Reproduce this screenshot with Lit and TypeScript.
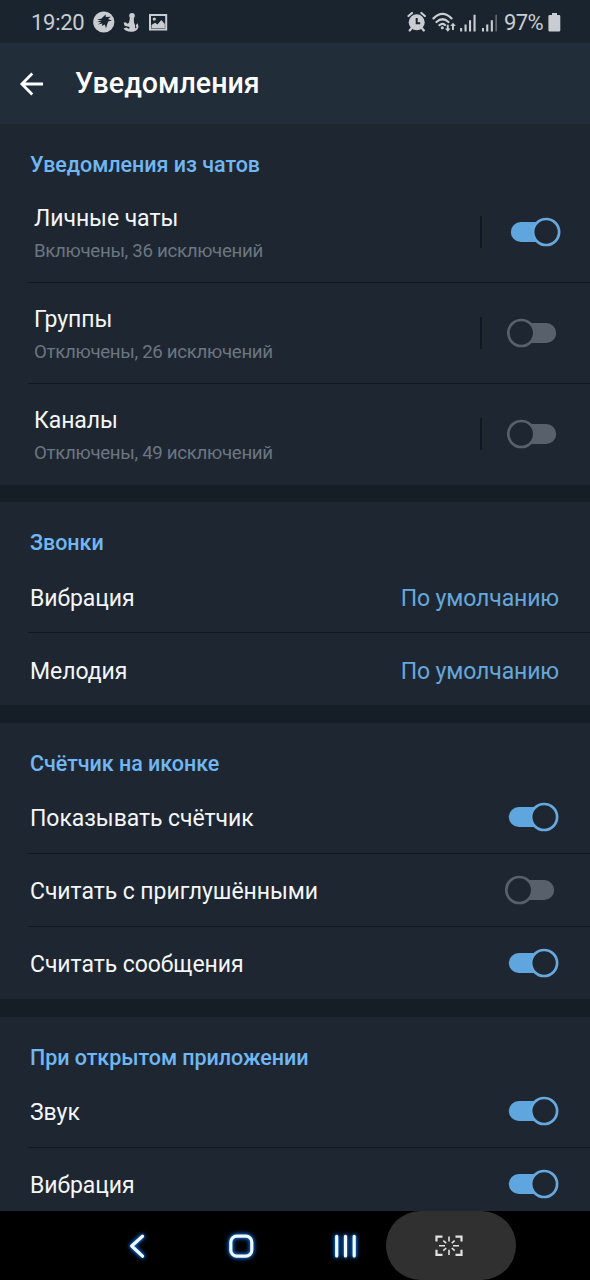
import { LitElement, html, svg, css, nothing } from "lit";
import { customElement, property } from "lit/decorators.js";

interface Row {
  label: string;
  detail?: string;
  value?: string;
  on?: boolean;
}
interface Section {
  title: string;
  rows: Row[];
}

const SECTIONS: Section[] = [
  {
    title: "Уведомления из чатов",
    rows: [
      { label: "Личные чаты", detail: "Включены, 36 исключений", on: true },
      { label: "Группы", detail: "Отключены, 26 исключений", on: false },
      { label: "Каналы", detail: "Отключены, 49 исключений", on: false },
    ],
  },
  {
    title: "Звонки",
    rows: [
      { label: "Вибрация", value: "По умолчанию" },
      { label: "Мелодия", value: "По умолчанию" },
    ],
  },
  {
    title: "Счётчик на иконке",
    rows: [
      { label: "Показывать счётчик", on: true },
      { label: "Считать с приглушёнными", on: false },
      { label: "Считать сообщения", on: true },
    ],
  },
  {
    title: "При открытом приложении",
    rows: [
      { label: "Звук", on: true },
      { label: "Вибрация", on: true },
    ],
  },
];

@customElement("toggle-switch")
export class ToggleSwitch extends LitElement {
  @property({ type: Boolean }) on = false;

  static styles = css`
    :host { display: block; width: 54px; height: 30px; }
    svg { display: block; }
    .track-on { fill: #5fa5de; }
    .track-off { fill: #57606b; }
    .knob { fill: #1e2731; stroke-width: 2.7; }
    .knob-on { stroke: #66a9df; }
    .knob-off { stroke: #57606b; }
  `;

  render() {
    return html`<svg width="54" height="30" viewBox="0 0 54 30">
      ${this.on
        ? svg`<rect class="track-on" x="3.8" y="5" width="42" height="20" rx="10"/>
              <circle class="knob knob-on" cx="39.1" cy="15" r="13"/>`
        : svg`<rect class="track-off" x="10" y="5" width="39.2" height="20" rx="10"/>
              <circle class="knob knob-off" cx="14.3" cy="15" r="13"/>`}
    </svg>`;
  }
}

@customElement("status-bar")
export class StatusBar extends LitElement {
  static styles = css`
    :host {
      display: flex;
      align-items: center;
      justify-content: space-between;
      height: 43px;
      box-sizing: border-box;
      padding: 0 29px 0 31px;
      background: #1a242e;
      color: #c9cdd1;
      font-size: 22px;
    }
    .side { display: flex; align-items: center; height: 24px; }
    svg { display: block; fill: currentColor; flex: none; }
    .line { fill: none; stroke: currentColor; stroke-width: 2.2; stroke-linecap: round; }
    .cut { fill: #1a242e; }
    .dim { opacity: 0.4; }
    .time { width: 62px; white-space: nowrap; letter-spacing: -0.3px; padding-top: 1px; }
    .percent { width: 44px; white-space: nowrap; letter-spacing: -0.6px; padding-top: 1px; }
  `;

  render() {
    return html`
      <div class="side">
        <span class="time">19:20</span>
        <svg width="22" height="24" viewBox="0 0 22 24">
          <circle cx="10.8" cy="12" r="10.6"/>
          <path class="cut" d="M4 9.8 8.5 8.4 12.5 4.6 12.8 7 17.8 6.8 15 9 18.8 10.5 15.2 11.5 14.2 14.2 13 18.3 11.8 14.6 8.7 16 9.5 13.6 4.6 14.6 8.2 12.4 4.4 11.6 8.8 10.4Z"/>
        </svg>
        <svg width="34" height="24" viewBox="0 0 34 24">
          <circle cx="17" cy="5.8" r="2.8"/>
          <path d="M15 7.5 18.8 8 19 12.5 20 15 20.2 18.6 21.5 17.8 20.8 15.2 22.6 13.2 23.5 16.5C23 20.2 20 21.7 16.3 21.7 12.3 21.7 9.6 20.4 8.6 18.2L11.5 17.5 14 19 14.6 17 9.6 15.8 8.6 12.8 10.5 12.2 12.5 13.8 14 12.8Z"/>
        </svg>
        <svg width="20" height="24" viewBox="0 0 20 24">
          <path fill-rule="evenodd" d="M0 4H18.2V20.6H0ZM2 6V18.6H16.2V6Z"/>
          <path d="M2.5 15 6 12.8 8.5 14.5 12.3 10 15.8 14V18H2.5Z"/><circle cx="5.3" cy="9" r="1.6"/>
        </svg>
      </div>
      <div class="side">
        <svg width="25" height="24" viewBox="0 0 25 24">
          <circle cx="9.7" cy="12.3" r="8"/>
          <path class="line" d="M1.5 6 5 3M14.4 3 17.9 6M4.5 18.2 2.7 20.5M15 18.2 16.8 20.5"/>
          <path d="M9.7 8V13.2H13.2" fill="none" stroke="#1a242e" stroke-width="2"/>
        </svg>
        <svg width="28" height="24" viewBox="0 0 28 24">
          <path class="line" d="M1.5 8.4Q10.5-.5 19.5 8.4M4.5 12Q10.5 6.5 16.5 12M7.5 15.2Q10.5 12.7 13 15"/>
          <circle cx="10.3" cy="17.7" r="1.5"/>
          <path d="M14.8 14.8H16.7V18.5H18.5L15.8 21.8 13 18.5H14.8ZM20 20V16H18.2L21 12.8 23.8 16H21.9V20Z"/>
        </svg>
        <svg width="22" height="24" viewBox="0 0 22 24">
          <path d="M.1 18H2.1V21.6H.1ZM4.5 14.6H6.6V21.6H4.5ZM9 10.2H11.1V21.6H9ZM13.5 4.8H15.6V21.6H13.5Z"/>
        </svg>
        <svg width="22" height="24" viewBox="0 0 22 24">
          <path d="M0 18H2V21.6H0ZM4.2 14.6H6.3V21.6H4.2ZM8.8 10.2H10.9V21.6H8.8Z"/>
          <path class="dim" d="M13.3 4.8H15V21.6H13.3Z"/>
        </svg>
        <span class="percent">97%</span>
        <svg width="13" height="24" viewBox="0 0 13 24">
          <path d="M4 3H9V5H11Q12.3 5 12.3 6.3V20.2Q12.3 21.5 11 21.5H1.7Q.4 21.5 .4 20.2V6.3Q.4 5 1.7 5H4Z"/>
        </svg>
      </div>`;
  }
}

@customElement("nav-bar")
export class NavBar extends LitElement {
  static styles = css`
    :host {
      display: flex;
      align-items: center;
      height: 69px;
      flex: none;
      background: #000;
      padding-left: 117px;
    }
    svg { display: block; fill: none; stroke: #f2f9ff; stroke-width: 3.2; stroke-linecap: round; stroke-linejoin: round; }
    .glow { filter: drop-shadow(0 0 1.5px #0b6cd8) drop-shadow(0 0 2.2px #0866d4); }
    .key { width: 104px; flex: none; }
    .key.last { width: 61px; }
    .assist {
      display: flex;
      align-items: center;
      justify-content: center;
      width: 130px;
      height: 69px;
      border-radius: 35px;
      background: #303030;
      box-sizing: border-box;
      padding-right: 4px;
    }
    .scan { stroke: #e2e2e2; stroke-width: 1.6; stroke-linecap: butt; stroke-linejoin: miter; }
    .corner { stroke-width: 2.2; }
  `;

  render() {
    return html`
      <div class="key"><svg class="glow" width="40" height="44" viewBox="0 0 40 44">
        <path d="M25.5 12.3 14.7 22 25.5 32.2"/></svg></div>
      <div class="key"><svg class="glow" width="40" height="44" viewBox="0 0 40 44">
        <rect x="9.8" y="12.2" width="21" height="20" rx="6"/></svg></div>
      <div class="key last"><svg class="glow" width="40" height="44" viewBox="0 0 40 44">
        <path d="M11.7 12.3V32M20.5 12.3V32M29.2 12.3V32"/></svg></div>
      <div class="assist"><svg class="scan" width="30" height="24" viewBox="0 0 30 24">
        <path class="corner" d="M2.5 7.5V2.7H8.5M21.5 2.7H27.5V7.5M27.5 15.7V20.8H21.5M8.5 20.8H2.5V15.7"/>
        <path d="M15 2.5V7.5M15 15.7V21M5 11.7H11M19 11.7H25M9.3 6.7 12.2 9.2M20.7 6.7 17.8 9.2M9.3 16.7 12.2 14M20.7 16.7 17.8 14"/>
      </svg></div>`;
  }
}

@customElement("app-root")
export class AppRoot extends LitElement {
  static styles = css`
    :host {
      display: flex;
      flex-direction: column;
      height: 1280px;
      overflow: hidden;
      background: #151d26;
      color: #f4f6f8;
      font-family: Roboto, "Noto Sans", sans-serif;
    }
    .header {
      display: flex;
      align-items: center;
      height: 81px;
      flex: none;
      background: #212d39;
      padding-left: 19px;
    }
    .back { display: block; width: 56px; height: 26px; fill: none; stroke: #fff; stroke-width: 2.8; }
    h1 { margin: 0; font-size: 28.6px; font-weight: 500; line-height: 34px; padding-bottom: 2px; color: #fff; white-space: nowrap; }
    .list {
      flex: 1;
      min-height: 0;
      overflow: hidden;
      display: flex;
      flex-direction: column;
      gap: 17.4px;
    }
    .section { background: #1e2731; flex: none; }
    .section:last-child { margin-top: 0.8px; }
    h2 {
      margin: 0;
      height: 58px;
      box-sizing: border-box;
      padding: 28px 0 0 30px;
      font-size: 21.5px;
      letter-spacing: -0.04px;
      line-height: 26px;
      font-weight: 500;
      color: #70b7f3;
      white-space: nowrap;
    }
    .row {
      display: flex;
      align-items: center;
      height: 73px;
      box-sizing: border-box;
      margin-left: 28px;
      padding: 0 31px 0 2px;
      border-bottom: 1px solid #10171e;
    }
    .row:last-child { border-bottom: 0; height: 72px; }
    .row.tall, .row.tall:last-child { height: 101px; padding-left: 6px; }
    .row.tall:last-child { padding-bottom: 1px; }
    .row.tall.toggle { padding-right: 29.5px; }
    .text { flex: 1; display: flex; flex-direction: column; gap: 7px; padding-top: 4px; white-space: nowrap; }
    .label { font-size: 23px; letter-spacing: -0.06px; line-height: 27px; }
    .detail { font-size: 18.7px; line-height: 24px; letter-spacing: -0.32px; color: #6b7681; }
    .value { font-size: 23px; letter-spacing: -0.12px; line-height: 27px; padding-top: 4px; color: #66a7dc; white-space: nowrap; }
    .rule { width: 2px; height: 32px; background: #11181f; margin-right: 24.5px; }
  `;

  private renderRow(row: Row) {
    const toggle = row.on !== undefined;
    return html`<div class="row ${row.detail ? "tall" : ""} ${toggle ? "toggle" : ""}">
      <div class="text">
        <span class="label">${row.label}</span>
        ${row.detail ? html`<span class="detail">${row.detail}</span>` : nothing}
      </div>
      ${row.detail ? html`<span class="rule"></span>` : nothing}
      ${row.value ? html`<span class="value">${row.value}</span>` : nothing}
      ${toggle ? html`<toggle-switch ?on=${row.on}></toggle-switch>` : nothing}
    </div>`;
  }

  render() {
    return html`
      <status-bar></status-bar>
      <header class="header">
        <svg class="back" viewBox="0 0 56 26"><path d="M24 13H3.5M13.3 2.6 2.9 13 13.3 23.4"/></svg>
        <h1>Уведомления</h1>
      </header>
      <main class="list">
        ${SECTIONS.map(
          (s) => html`<section class="section"><h2>${s.title}</h2>${s.rows.map((r) => this.renderRow(r))}</section>`,
        )}
      </main>
      <nav-bar></nav-bar>`;
  }
}
